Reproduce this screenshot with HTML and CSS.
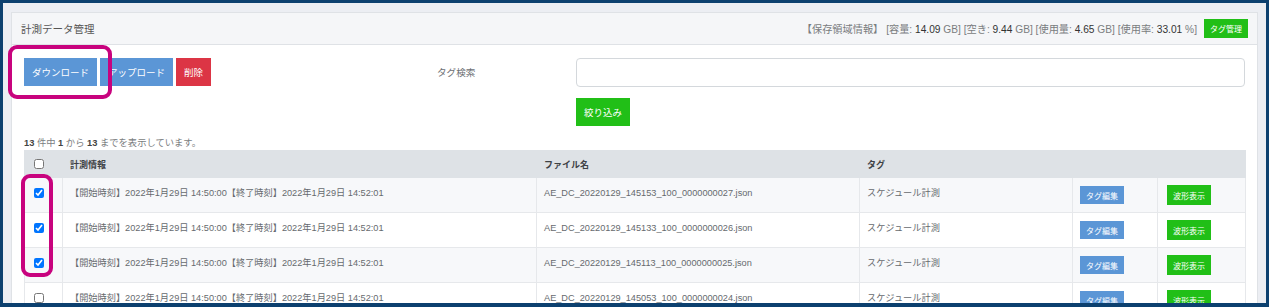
FILE: index.html
```html
<!DOCTYPE html>
<html lang="ja">
<head>
    <meta charset="UTF-8">
    <meta name="viewport" content="width=device-width, initial-scale=1.0">
    <title>計測データ管理</title>
    <link rel="stylesheet" href="styles.css">
</head>
<body>
    <div class="frame">
        <div class="card">
            <div class="card-header">
                <span class="title">計測データ管理</span>
                <div class="storage">
                    <span>【保存領域情報】 [容量: <em>14.09</em> GB] [空き: <em>9.44</em> GB] [使用量: <em>4.65</em> GB] [使用率: <em>33.01</em> %]</span>
                    <button class="btn btn-green btn-xs">タグ管理</button>
                </div>
            </div>
            <div class="card-body">
                <div class="toolbar">
                    <div class="actions">
                        <button class="btn btn-blue">ダウンロード</button>
                        <button class="btn btn-blue">アップロード</button>
                        <button class="btn btn-red">削除</button>
                    </div>
                    <label class="search-label" for="tagSearch">タグ検索</label>
                    <div class="search">
                        <input type="text" id="tagSearch" class="search-input">
                        <button class="btn btn-green">絞り込み</button>
                    </div>
                </div>
                <p class="count"><b>13</b> 件中 <b>1</b> から <b>13</b> までを表示しています。</p>
                <table class="data-table">
                    <colgroup>
                        <col class="c-check">
                        <col class="c-info">
                        <col class="c-file">
                        <col class="c-tag">
                        <col class="c-edit">
                        <col class="c-wave">
                    </colgroup>
                    <thead>
                        <tr>
                            <th class="check"><input type="checkbox"></th>
                            <th>計測情報</th>
                            <th>ファイル名</th>
                            <th>タグ</th>
                            <th></th>
                            <th></th>
                        </tr>
                    </thead>
                    <tbody>
                        <tr>
                            <td class="check"><input type="checkbox" checked></td>
                            <td>【開始時刻】2022年1月29日 14:50:00【終了時刻】2022年1月29日 14:52:01</td>
                            <td>AE_DC_20220129_145153_100_0000000027.json</td>
                            <td>スケジュール計測</td>
                            <td class="edit"><button class="btn btn-blue btn-xs">タグ編集</button></td>
                            <td class="wave"><button class="btn btn-green btn-xs">波形表示</button></td>
                        </tr>
                        <tr>
                            <td class="check"><input type="checkbox" checked></td>
                            <td>【開始時刻】2022年1月29日 14:50:00【終了時刻】2022年1月29日 14:52:01</td>
                            <td>AE_DC_20220129_145133_100_0000000026.json</td>
                            <td>スケジュール計測</td>
                            <td class="edit"><button class="btn btn-blue btn-xs">タグ編集</button></td>
                            <td class="wave"><button class="btn btn-green btn-xs">波形表示</button></td>
                        </tr>
                        <tr>
                            <td class="check"><input type="checkbox" checked></td>
                            <td>【開始時刻】2022年1月29日 14:50:00【終了時刻】2022年1月29日 14:52:01</td>
                            <td>AE_DC_20220129_145113_100_0000000025.json</td>
                            <td>スケジュール計測</td>
                            <td class="edit"><button class="btn btn-blue btn-xs">タグ編集</button></td>
                            <td class="wave"><button class="btn btn-green btn-xs">波形表示</button></td>
                        </tr>
                        <tr>
                            <td class="check"><input type="checkbox"></td>
                            <td>【開始時刻】2022年1月29日 14:50:00【終了時刻】2022年1月29日 14:52:01</td>
                            <td>AE_DC_20220129_145053_100_0000000024.json</td>
                            <td>スケジュール計測</td>
                            <td class="edit"><button class="btn btn-blue btn-xs">タグ編集</button></td>
                            <td class="wave"><button class="btn btn-green btn-xs">波形表示</button></td>
                        </tr>
                    </tbody>
                </table>
            </div>
        </div>
    </div>

    <!-- 注目箇所の枠 -->
    <div class="mark mark-download"></div>
    <div class="mark mark-checks"></div>
</body>
</html>
```

FILE: styles.css
```css
html, body {
    margin: 0;
    height: 307px;
    overflow: hidden;
}
body {
    position: relative;
    box-sizing: border-box;
    padding: 3px 3px 4px;
    background: #0c406f;
    font-family: 'Liberation Sans', 'Noto Sans CJK JP', sans-serif;
    color: #666a6e;
}
.frame {
    height: 100%;
    box-sizing: border-box;
    padding: 9px 8px 0;
    background: #eceef3;
    overflow: hidden;
}
.card {
    background: #ffffff;
    border: 1px solid #dfe2e6;
}
.card-header {
    display: flex;
    justify-content: space-between;
    align-items: center;
    height: 31px;
    padding: 0 9px;
    background: #f5f6f8;
    border-bottom: 1px solid #dfe2e6;
}
.title {
    font-size: 10.5px;
    color: #555555;
}
.storage {
    display: flex;
    align-items: center;
    gap: 7px;
    font-size: 10.2px;
    color: #7a7d80;
}
.storage em {
    font-style: normal;
    color: #333333;
}
.btn {
    border: none;
    border-radius: 0;
    color: #ffffff;
    font-family: inherit;
    font-size: 9.5px;
    height: 28px;
    padding: 0 8px;
    cursor: pointer;
}
.btn-blue {
    background: #5b96d6;
}
.btn-red {
    background: #dc3545;
}
.btn-green {
    background: #21bf17;
}
.btn-xs {
    font-size: 8px;
    height: 18px;
    padding: 0 6px;
}
.storage .btn-xs {
    height: 19px;
}
.card-body {
    padding: 13px 12px 0;
}
.toolbar {
    display: flex;
    align-items: flex-start;
}
.actions {
    display: flex;
    gap: 3px;
    width: 413px;
}
.search-label {
    width: 139px;
    line-height: 29px;
    font-size: 9.6px;
    color: #6d7074;
}
.search {
    flex: 1;
    display: flex;
    flex-direction: column;
    align-items: flex-start;
    gap: 11px;
}
.search-input {
    width: 100%;
    height: 29px;
    box-sizing: border-box;
    border: 1px solid #d4d8dc;
    border-radius: 4px;
    margin: 0;
}
.count {
    margin: 11px 0 0;
    line-height: 13px;
    font-size: 9.3px;
    color: #7a7d80;
}
.count b {
    color: #444444;
}
.data-table {
    width: 100%;
    table-layout: fixed;
    border-collapse: collapse;
    font-size: 9.2px;
}
.c-check { width: 38px; }
.c-info { width: 474px; }
.c-file { width: 323px; }
.c-tag { width: 213px; }
.c-edit { width: 85px; }
.c-wave { width: 88px; }
.data-table th,
.data-table td {
    border: 1px solid #e6e8eb;
    text-align: left;
}
.data-table th {
    height: 26px;
    padding: 0 7px;
    background: #dee2e6;
    border-color: #dee2e6;
    font-size: 9px;
    color: #3f4246;
}
.data-table td {
    padding: 8px 7px 8px;
    vertical-align: top;
    line-height: 14px;
    white-space: nowrap;
}
.data-table tbody tr:nth-child(odd) {
    background: #f7f8fa;
}
.data-table .check {
    padding-left: 9px;
}
.data-table input[type="checkbox"] {
    width: 10px;
    height: 10px;
    margin: 0;
    display: block;
}
.data-table td.check input {
    margin-top: 2px;
}
.data-table td.edit,
.data-table td.wave {
    line-height: 0;
}
.data-table td.wave {
    padding-left: 9px;
}
.data-table td.wave .btn {
    height: 20px;
    margin: -1px 0;
}
.mark {
    position: absolute;
    border: 4px solid #c8037e;
    border-radius: 9px;
    box-sizing: border-box;
}
.mark-download {
    left: 8px;
    top: 45px;
    width: 104px;
    height: 54px;
}
.mark-checks {
    left: 21px;
    top: 174px;
    width: 32px;
    height: 103px;
}
```
